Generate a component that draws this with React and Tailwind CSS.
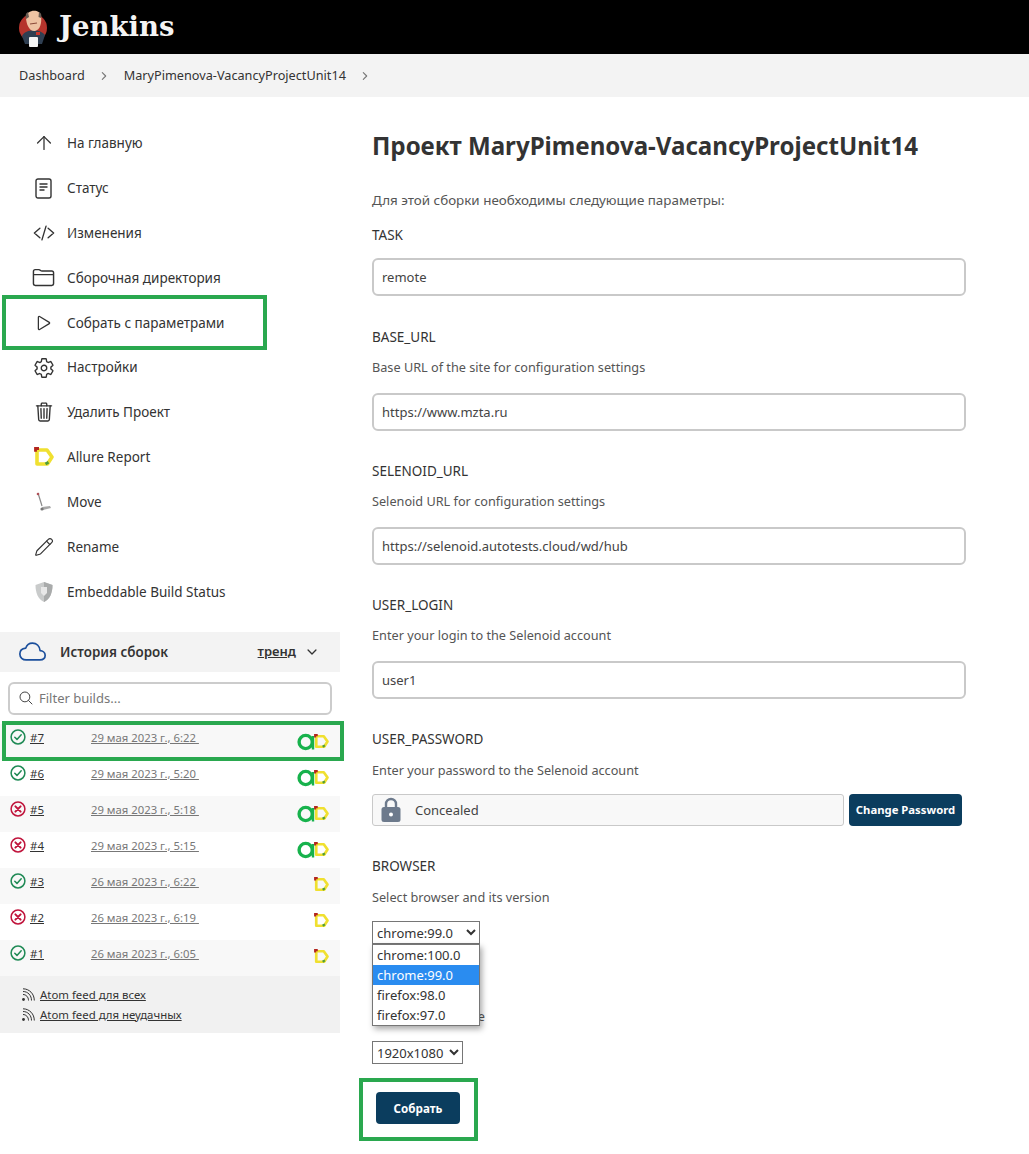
import {
  IoCodeSlashOutline,
  IoFolderOutline,
  IoPlayOutline,
  IoSettingsOutline,
  IoTrashOutline,
  IoCloudOutline,
  IoSearchOutline,
  IoChevronForward,
  IoChevronDown,
} from 'react-icons/io5';
import { ArrowUp, Pencil } from 'lucide-react';

const AllureIcon = ({ size = 20 }) => (
  <svg width={size} height={size} viewBox="0 0 20 20" fill="none">
    <path d="M3 3 H13 L18 10 L13.5 17 H3 Z" stroke="#f0e030" strokeWidth="3.6" strokeLinejoin="round" />
    <path d="M1.5 4.8 V1.5 H5" stroke="#b3261e" strokeWidth="2.8" />
    <path d="M11.5 17 L14.5 15.2" stroke="#4f9d3a" strokeWidth="2.8" />
  </svg>
);

const AnsiIcon = () => (
  <svg width="18" height="18" viewBox="0 0 18 18" fill="none">
    <circle cx="8.7" cy="9" r="6.6" stroke="#17b24c" strokeWidth="3.4" />
    <path d="M16 3 V16.5" stroke="#17b24c" strokeWidth="2.4" />
  </svg>
);

const StatusIcon = ({ ok }) => (
  <svg width="16" height="16" viewBox="0 0 16 16" fill="none" className="shrink-0">
    <circle cx="8" cy="8" r="6.9" stroke={ok ? '#1f8a55' : '#c0143c'} strokeWidth="1.5" />
    {ok ? (
      <path d="M4.8 8.3 L7 10.4 L11.2 5.8" stroke="#1f8a55" strokeWidth="1.5" strokeLinecap="round" strokeLinejoin="round" />
    ) : (
      <path d="M5.4 5.4 L10.6 10.6 M10.6 5.4 L5.4 10.6" stroke="#c0143c" strokeWidth="2" strokeLinecap="round" />
    )}
  </svg>
);

const StatusDocIcon = () => (
  <svg width="17" height="21" viewBox="0 0 17 21" fill="none" stroke="#333">
    <rect x="1" y="1" width="15" height="19" rx="2" strokeWidth="1.4" />
    <path d="M4.5 6 H12.5 M4.5 9 H12.5 M4.5 12 H9.5" strokeWidth="1.4" />
  </svg>
);

const FeedIcon = () => (
  <svg width="14" height="14" viewBox="0 0 14 14" fill="none" stroke="#333" strokeWidth="1" className="shrink-0">
    <circle cx="2.5" cy="11.5" r="1.4" fill="#333" stroke="none" />
    <path d="M2 6.5 C5 6.5 7.5 9 7.5 12.5" />
    <path d="M2 3.5 C7 3.5 10.5 7.5 10.5 12.5" />
    <path d="M2 0.8 C8.5 0.8 13.3 6 13.3 12.5" />
  </svg>
);

const MoveIcon = () => (
  <svg width="20" height="22" viewBox="0 0 20 22" fill="none">
    <path d="M4 2 L8 15" stroke="#8a8a8a" strokeWidth="1.2" />
    <circle cx="4" cy="3" r="1.3" fill="#b0525a" />
    <path d="M8 16 L16 15 L17 17 L9 19 Z" fill="#a8a8a8" />
    <circle cx="8" cy="18" r="1.6" fill="#777" />
  </svg>
);

const ShieldIcon = () => (
  <svg width="20" height="22" viewBox="0 0 20 22">
    <path d="M10 1 L18.5 4 C18.5 12 16 18 10 21 C4 18 1.5 12 1.5 4 Z" fill="#c9cbcb" />
    <path d="M10 1 L18.5 4 C18.5 12 16 18 10 21 Z" fill="#a9abab" />
    <path d="M7 6 H13 V12 L10 15 L7 12 Z" fill="#e8e8e8" />
  </svg>
);

const LockIcon = () => (
  <svg width="20" height="26" viewBox="0 0 20 26">
    <path d="M5 11 V7 a5 5 0 0 1 10 0 V11" fill="none" stroke="#6d7a8c" strokeWidth="2.4" />
    <rect x="0.5" y="10" width="19" height="15" rx="2.5" fill="#6d7a8c" />
    <circle cx="10" cy="17.5" r="2" fill="#fff" />
  </svg>
);

const JenkinsLogo = () => (
  <svg width="30" height="40" viewBox="0 0 30 40" className="shrink-0">
    <circle cx="15" cy="21" r="14" fill="#b5342c" />
    <path d="M4 29 C7 22 22 21 27 28 L24 37 H7 Z" fill="#2f3f52" />
    <path d="M8 10 C8 3 22 1 23 9 C24 16 22 23 17 24 C12 25 8 18 8 10 Z" fill="#eec3a3" />
    <path d="M8 12 C7 8 8 6 10 5 L11 10 Z" fill="#6a5b52" />
    <path d="M23 11 C24 8 23 6 21 5 L20.5 10 Z" fill="#6a5b52" />
    <path d="M12 17 L19 16" stroke="#8a4a3a" strokeWidth="1.2" />
    <rect x="11" y="30" width="9" height="10" rx="1" fill="#f4f4f4" />
    <rect x="18" y="25" width="4" height="3" fill="#c8362c" />
  </svg>
);

const sideItems = [
  { label: 'На главную', icon: <ArrowUp size={22} strokeWidth={1.4} /> },
  { label: 'Статус', icon: <StatusDocIcon /> },
  { label: 'Изменения', icon: <IoCodeSlashOutline size={22} /> },
  { label: 'Сборочная директория', icon: <IoFolderOutline size={23} /> },
  { label: 'Собрать с параметрами', icon: <IoPlayOutline size={20} /> },
  { label: 'Настройки', icon: <IoSettingsOutline size={22} /> },
  { label: 'Удалить Проект', icon: <IoTrashOutline size={22} /> },
  { label: 'Allure Report', icon: <AllureIcon /> },
  { label: 'Move', icon: <MoveIcon /> },
  { label: 'Rename', icon: <Pencil size={20} strokeWidth={1.4} /> },
  { label: 'Embeddable Build Status', icon: <ShieldIcon /> },
];

const builds = [
  { no: '#7', date: '29 мая 2023 г., 6:22', ok: true, ansi: true },
  { no: '#6', date: '29 мая 2023 г., 5:20', ok: true, ansi: true },
  { no: '#5', date: '29 мая 2023 г., 5:18', ok: false, ansi: true },
  { no: '#4', date: '29 мая 2023 г., 5:15', ok: false, ansi: true },
  { no: '#3', date: '26 мая 2023 г., 6:22', ok: true, ansi: false },
  { no: '#2', date: '26 мая 2023 г., 6:19', ok: false, ansi: false },
  { no: '#1', date: '26 мая 2023 г., 6:05', ok: true, ansi: false },
];

const Field = ({ label, hint, value }) => (
  <div className={hint ? 'mb-[30.6px]' : 'mb-[31.4px]'}>
    <div className="h-[20px] leading-[20px] text-[13.5px] text-[#333]">{label}</div>
    {hint && <div className="mt-[10px] h-[20px] leading-[20px] text-[12.7px] text-[#555]">{hint}</div>}
    <input
      readOnly
      value={value}
      className={`${hint ? 'mt-[15.4px]' : 'mt-[13px]'} block w-[594px] h-[38px] px-[8px] text-[13px] text-[#444] bg-white border-2 border-[#c9c9c9] rounded-md`}
    />
  </div>
);

export default function App() {
  return (
    <div className="w-[1029px] h-[1154px] relative bg-white overflow-hidden font-['Noto_Sans',sans-serif] text-[#333]">
      {/* header */}
      <div className="h-[54px] bg-black flex items-center pl-[18px] gap-[11px]">
        <JenkinsLogo />
        <span className="text-[27.5px] font-bold text-[#f4f4f4] font-['DejaVu_Serif',serif]">Jenkins</span>
      </div>
      {/* breadcrumb */}
      <div className="h-[43px] bg-[#f3f3f3] flex items-center pl-[19px] text-[12.7px] text-[#333]">
        <span>Dashboard</span>
        <IoChevronForward size={12} className="ml-[13px] mr-[14px] text-[#777]" />
        <span>MaryPimenova-VacancyProjectUnit14</span>
        <IoChevronForward size={12} className="ml-[13px] text-[#777]" />
      </div>

      <div className="flex">
        {/* sidebar */}
        <div className="w-[340px] pt-[23.7px]">
          {sideItems.map(item => (
            <div key={item.label} className="h-[44.9px] flex items-center text-[13.5px] text-[#333]">
              <span className="w-[67px] pl-[29px] pr-[9px] flex justify-center items-center shrink-0 text-[#333]">
                <span className="w-[28px] flex justify-center shrink-0">{item.icon}</span>
              </span>
              <span>{item.label}</span>
            </div>
          ))}

          <div className="mt-[17.3px] h-[40px] bg-[#f3f3f3] flex items-center pl-[19px] pr-[21px]">
            <IoCloudOutline size={27} className="text-[#1b4f9c]" />
            <span className="ml-[14px] text-[13.4px] font-semibold">История сборок</span>
            <span className="ml-auto text-[13px] font-semibold underline">тренд</span>
            <IoChevronDown size={14} className="ml-[9px]" />
          </div>

          <div className="mx-[8px] mt-[10px] h-[33px] flex items-center px-[8px] bg-white border-2 border-[#ccc] rounded-md">
            <IoSearchOutline size={16} className="text-[#444]" />
            <span className="ml-[5px] text-[13px] text-[#777]">Filter builds...</span>
          </div>

          <div className="mt-[9px]">
            {builds.map((b, i) => (
              <div
                key={b.no}
                className={`h-[36px] flex items-start pl-[10px] pr-[10px] pt-[5px] ${i % 2 === 0 ? 'bg-[#f8f8f8]' : 'bg-white'}`}
              >
                <StatusIcon ok={b.ok} />
                <span className="w-[61px] ml-[4px] text-[11.5px] underline leading-[18px]">{b.no}</span>
                <span className="text-[11.3px] text-[#777] underline leading-[18px] whitespace-pre">{b.date} </span>
                <span className="ml-auto mt-[4px] flex items-center">
                  {b.ansi && <AnsiIcon />}
                  <span className="-ml-[1px] mr-[1px]">
                    <AllureIcon size={15} />
                  </span>
                </span>
              </div>
            ))}
          </div>

          <div className="h-[57px] bg-[#f1f1f1] pl-[21px] pt-[9px] text-[11.4px] leading-[20px]">
            <div className="flex items-center gap-[5px]">
              <FeedIcon />
              <span className="underline">Atom feed для всех</span>
            </div>
            <div className="flex items-center gap-[5px]">
              <FeedIcon />
              <span className="underline">Atom feed для неудачных</span>
            </div>
          </div>
        </div>

        {/* main */}
        <div className="ml-[32px] w-[594px] relative">
          <h1 className="mt-[31px] h-[36px] leading-[36px] text-[24.1px] font-bold text-[#333]">
            Проект MaryPimenova-VacancyProjectUnit14
          </h1>
          <div className="mt-[26px] h-[20px] leading-[20px] text-[13.4px] text-[#555]">
            Для этой сборки необходимы следующие параметры:
          </div>
          <div className="mt-[15px]">
            <Field label="TASK" value="remote" />
            <Field label="BASE_URL" hint="Base URL of the site for configuration settings" value="https://www.mzta.ru" />
            <Field label="SELENOID_URL" hint="Selenoid URL for configuration settings" value="https://selenoid.autotests.cloud/wd/hub" />
            <Field label="USER_LOGIN" hint="Enter your login to the Selenoid account" value="user1" />
          </div>

          <div className="h-[20px] leading-[20px] text-[13.5px]">USER_PASSWORD</div>
          <div className="mt-[11px] h-[20px] leading-[20px] text-[12.7px] text-[#555]">Enter your password to the Selenoid account</div>
          <div className="mt-[14px] flex items-center">
            <div className="w-[472px] h-[32px] flex items-center bg-[#f8f8f8] border border-[#c9c9c9] rounded-[3px] pl-[8px]">
              <LockIcon />
              <span className="ml-[14px] text-[13px] text-[#444]">Concealed</span>
            </div>
            <button className="ml-[5px] w-[113px] h-[32px] bg-[#0b3d5e] text-white text-[11.3px] font-bold rounded-[4px]">
              Change Password
            </button>
          </div>

          <div className="mt-[30px] h-[20px] leading-[20px] text-[13.5px]">BROWSER</div>
          <div className="mt-[11px] h-[20px] leading-[20px] text-[12.7px] text-[#555]">Select browser and its version</div>
          <div className="relative mt-[14px]">
            <select
              defaultValue="chrome:99.0"
              className="block w-[108px] h-[23px] text-[13px] bg-white border border-[#767676]"
            >
              <option>chrome:100.0</option>
              <option>chrome:99.0</option>
              <option>firefox:98.0</option>
              <option>firefox:97.0</option>
            </select>
            {/* open dropdown of the browser select */}
            <div className="absolute left-0 top-[23px] w-[108px] z-10 bg-white border border-[#767676] shadow-[2px_3px_6px_rgba(0,0,0,0.35)] text-[13px] leading-[20px]">
              <div className="pl-[4px] h-[20px]">chrome:100.0</div>
              <div className="pl-[4px] h-[20px] bg-[#2a8cf0] text-white">chrome:99.0</div>
              <div className="pl-[4px] h-[20px]">firefox:98.0</div>
              <div className="pl-[4px] h-[20px]">firefox:97.0</div>
            </div>
          </div>

          <div className="mt-[31px] h-[20px] leading-[20px] text-[13.5px]">BROWSER_SIZE</div>
          <div className="mt-[11px] h-[20px] leading-[20px] text-[12.7px] text-[#555]">Select browser size</div>
          <select
            defaultValue="1920x1080"
            className="block mt-[15px] w-[91px] h-[23px] text-[13px] bg-white border border-[#767676]"
          >
            <option>1920x1080</option>
          </select>
          <button className="block mt-[28px] ml-[4px] w-[84px] h-[32px] bg-[#0b3d5e] text-white text-[11.6px] font-bold rounded-[4px]">
            Собрать
          </button>
        </div>
      </div>

      {/* green annotation frames drawn over the screenshot */}
      <div className="absolute left-[2px] top-[295px] w-[265px] h-[55px] border-[4px] border-[#2aa84f]" />
      <div className="absolute left-[2px] top-[721px] w-[342px] h-[40px] border-[4px] border-[#2aa84f]" />
      <div className="absolute left-[359px] top-[1078px] w-[119px] h-[63px] border-[4px] border-[#2aa84f]" />
    </div>
  );
}
